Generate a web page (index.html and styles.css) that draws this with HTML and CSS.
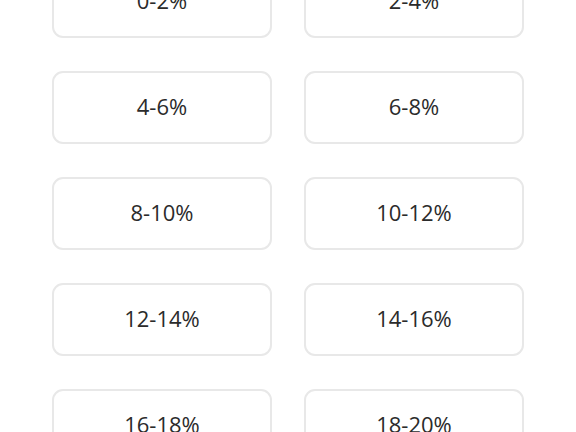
FILE: index.html
```html
<!DOCTYPE html>
<html>
<head>
<meta charset="utf-8">
<link rel="stylesheet" href="styles.css">
</head>
<body>
<div class="grid">
  <button class="opt">0-2%</button>
  <button class="opt">2-4%</button>
  <button class="opt">4-6%</button>
  <button class="opt">6-8%</button>
  <button class="opt">8-10%</button>
  <button class="opt">10-12%</button>
  <button class="opt">12-14%</button>
  <button class="opt">14-16%</button>
  <button class="opt">16-18%</button>
  <button class="opt">18-20%</button>
</div>
</body>
</html>
```
FILE: styles.css
```css
html, body {
  margin: 0;
  padding: 0;
  background: #fff;
  overflow: hidden;
}
.grid {
  display: grid;
  grid-template-columns: 220px 220px;
  column-gap: 32px;
  row-gap: 33px;
  padding: 0 52px;
  margin-top: -35px;
}
.opt {
  height: 73px;
  box-sizing: border-box;
  border: 2px solid #e8e8e8;
  border-radius: 11px;
  background: #fff;
  font-family: "Open Sans", sans-serif;
  font-size: 22px;
  color: #2b2b2b;
  display: flex;
  align-items: center;
  justify-content: center;
  padding: 0 0 4px 0;
}
```
